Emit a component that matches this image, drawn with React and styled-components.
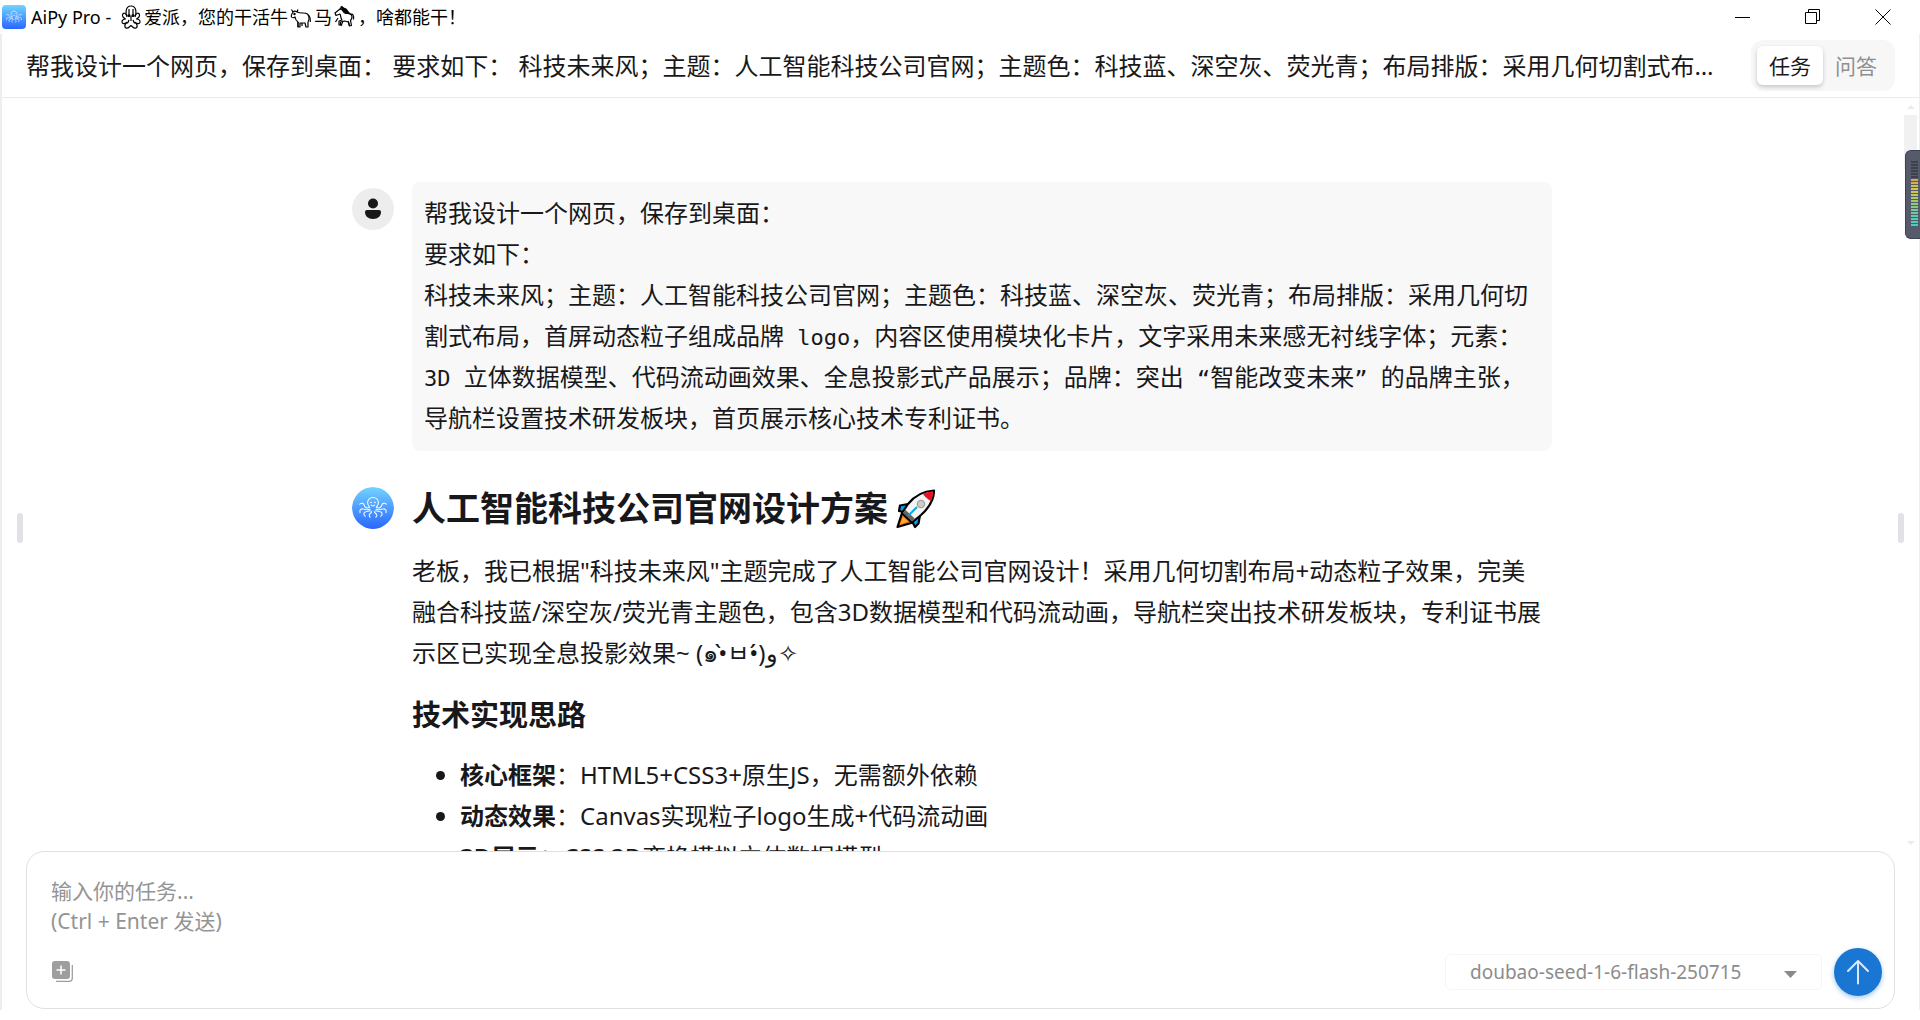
import React from "react";
import styled, { createGlobalStyle } from "styled-components";

const GlobalStyle = createGlobalStyle`
  * {
    box-sizing: border-box;
  }
  body {
    margin: 0;
    background: #fff;
    color: #18181b;
    font-family: "Noto Sans", "Noto Sans CJK SC", sans-serif;
  }
`;

const Window = styled.div`
  display: flex;
  flex-direction: column;
  height: 100vh;
  overflow: hidden;
`;

const TitleBar = styled.div`
  display: flex;
  align-items: center;
  justify-content: space-between;
  height: 34px;
  flex-shrink: 0;
  padding: 0 2px;
  color: #000;
`;

const WindowTitle = styled.div`
  display: flex;
  align-items: center;
  gap: 5px;
  font-size: 18px;
  line-height: 34px;
  white-space: pre;
`;

const TitleText = styled.span`
  display: flex;
  align-items: center;
`;

const WindowButtons = styled.div`
  display: flex;
`;

const WindowButton = styled.button`
  display: flex;
  align-items: center;
  justify-content: center;
  width: 70px;
  height: 34px;
  padding: 0;
  border: 0;
  background: none;
  color: #000;
`;

const AppFrame = styled.div`
  position: relative;
  display: flex;
  flex-direction: column;
  flex: 1;
  min-height: 0;
  margin-bottom: 10px;
  border-left: 2px solid #eee;
  border-right: 1px solid #eee;
`;

const Header = styled.header`
  display: flex;
  align-items: center;
  gap: 32px;
  height: 64px;
  flex-shrink: 0;
  padding: 0 24px;
  border-bottom: 1px solid #ebebeb;
`;

const ChatTitle = styled.h1`
  flex: 1;
  margin: 0;
  overflow: hidden;
  text-overflow: ellipsis;
  white-space: nowrap;
  font-size: 24px;
  font-weight: 400;
  line-height: 36px;
`;

const ModeSwitch = styled.div`
  display: flex;
  padding: 6px;
  border-radius: 12px;
  background: #f7f7f7;
`;

const ModeButton = styled.button`
  width: 66px;
  height: 39px;
  padding: 0;
  border: 0;
  border-radius: 6px;
  font-family: inherit;
  font-size: 21px;
  line-height: 30px;
  color: ${({ $active }) => ($active ? "#18181b" : "#8f8f8f")};
  background: ${({ $active }) => ($active ? "#fff" : "transparent")};
  box-shadow: ${({ $active }) => ($active ? "0 2px 4px rgba(0, 0, 0, 0.2)" : "none")};
`;

const ScrollArea = styled.main`
  display: flex;
  flex: 1;
  min-height: 0;
`;

const Messages = styled.div`
  flex: 1;
  overflow: hidden;
  padding: 84px 18px 0 16px;
`;

const Conversation = styled.div`
  display: flex;
  flex-direction: column;
  gap: 36px;
  max-width: 1200px;
  margin: 0 auto;
`;

const Message = styled.article`
  display: flex;
  gap: 18px;
`;

const Avatar = styled.div`
  display: flex;
  align-items: center;
  justify-content: center;
  flex-shrink: 0;
  width: 42px;
  height: 42px;
  margin-top: ${({ $offset }) => $offset || 0};
  border-radius: 50%;
  background: #ededed;
  overflow: hidden;
`;

const Bubble = styled.div`
  flex: 1;
  padding: 10px 12px 13px;
  border-radius: 8px;
  background: #f8f8f8;
  font-size: 24px;
  line-height: 41px;
  white-space: pre-wrap;
`;

const Mono = styled.span`
  font-family: "DejaVu Sans Mono", monospace;
  font-size: 22px;
  line-height: 24px;
`;

const Answer = styled.div`
  flex: 1;
  padding-right: 4px;
  font-size: 24px;
  line-height: 41px;
`;

const AnswerTitle = styled.h2`
  display: flex;
  align-items: center;
  gap: 8px;
  margin: 0 0 20px;
  font-size: 34px;
  line-height: 43px;
`;

const Paragraph = styled.p`
  margin: 0 0 20px;
`;

const SectionTitle = styled.h3`
  margin: 0 0 17px;
  font-size: 29px;
  line-height: 44px;
`;

const Points = styled.ul`
  margin: 0;
  padding-left: 48px;
`;

const Scrollbar = styled.div`
  display: flex;
  flex-direction: column;
  align-items: center;
  justify-content: space-between;
  width: 13px;
  margin-right: 2px;
  padding: 7px 0 6px;
`;

const ScrollThumb = styled.div`
  width: 13px;
  height: 54px;
  margin: 6px 0 auto;
  background: #f1f1f1;
`;

const Meter = styled.div`
  position: absolute;
  top: 116px;
  right: -1px;
  width: 15px;
  height: 89px;
  padding: 10px 2px 10px 5px;
  border: 1px solid #3d4250;
  border-right: 0;
  border-radius: 6px 0 0 6px;
  background: #555b6b;
`;

const MeterBars = styled.div`
  display: flex;
  flex-direction: column;
  gap: 1px;
`;

const MeterBar = styled.div`
  height: 2px;
  background: ${({ $color }) => $color};
`;

const Handle = styled.div`
  position: absolute;
  top: 479px;
  ${({ $side }) => ($side === "left" ? "left: 15px;" : "right: 15px;")}
  width: 6px;
  height: 30px;
  border-radius: 3px;
  background: #e1e1e6;
`;

const Composer = styled.form`
  display: flex;
  flex-direction: column;
  justify-content: space-between;
  height: 158px;
  flex-shrink: 0;
  margin: 0 24px 1px;
  padding: 24px 12px 12px 24px;
  border: 1px solid #e0e0e0;
  border-radius: 18px;
  background: #fff;
`;

const Prompt = styled.textarea`
  width: 100%;
  height: 60px;
  padding: 0;
  border: 0;
  outline: 0;
  resize: none;
  background: none;
  color: #18181b;
  font-family: inherit;
  font-size: 21px;
  line-height: 30px;
  &::placeholder {
    color: #949494;
    opacity: 1;
  }
`;

const ComposerBar = styled.div`
  display: flex;
  align-items: center;
  justify-content: space-between;
`;

const IconButton = styled.button`
  display: flex;
  padding: 0;
  border: 0;
  background: none;
`;

const SendGroup = styled.div`
  display: flex;
  align-items: center;
  gap: 12px;
`;

const ModelPicker = styled.div`
  position: relative;
  width: 377px;
`;

const ModelSelect = styled.select`
  appearance: none;
  width: 100%;
  height: 36px;
  padding: 0 48px 0 24px;
  border: 1px solid #f5f5f5;
  border-radius: 6px;
  background: #fff;
  color: #8c8c8c;
  font-family: inherit;
  font-size: 19px;
`;

const Caret = styled.svg`
  position: absolute;
  top: 17px;
  right: 25px;
  pointer-events: none;
`;

const SendButton = styled.button`
  display: flex;
  align-items: center;
  justify-content: center;
  width: 48px;
  height: 48px;
  padding: 0;
  border: 0;
  border-radius: 50%;
  background: #1976d2;
  box-shadow: 0 2px 5px rgba(25, 118, 210, 0.4);
`;

const meterColors = [
  ...Array(6).fill("#3d414d"),
  "#dba851",
  "#d9b04f",
  "#d6bd50",
  "#d0c452",
  "#c6c956",
  "#b9cb5c",
  "#adcb66",
  "#9ecb70",
  "#92cb7b",
  "#84cb87",
  "#78cb92",
  "#6dcb9d",
  "#62cba8",
  "#58cbb1",
  "#50cbb9",
  "#4ccbc0",
];

const points = [
  { name: "核心框架", text: "：HTML5+CSS3+原生JS，无需额外依赖" },
  { name: "动态效果", text: "：Canvas实现粒子logo生成+代码流动画" },
  { name: "3D展示", text: "：CSS 3D变换模拟立体数据模型" },
];

const OctopusLogo = ({ size, rx, id }) => (
  <svg width={size} height={size} viewBox="0 0 42 42" fill="none">
    <defs>
      <linearGradient id={id} x1="0" y1="0" x2="0" y2="1">
        <stop offset="0" stopColor="#72d4ff" />
        <stop offset="1" stopColor="#2a66ff" />
      </linearGradient>
    </defs>
    <rect width="42" height="42" rx={rx} fill={`url(#${id})`} />
    <g stroke="#fff" strokeWidth="1.1" strokeLinecap="round" strokeLinejoin="round" opacity=".92">
      <path d="M17.600 20.200c-1-1.200-2-2.600-2-4.400 0-3.200 2.400-5.300 5.400-5.300s5.400 2.100 5.400 5.300c0 1.800-1 3.200-2 4.400" />
      <path d="M19.300 18.200q1.700 1.500 3.400 0" />
      <path d="M17.600 20.200c-2.600 1.400-5 .4-5.400-2-.3-1.800-2.600-2.700-4.400-1M24.400 20.200c2.600 1.400 5 .4 5.400-2 .3-1.800 2.600-2.700 4.400-1" />
      <path d="M18 22.200c-3 1.300-5 .2-7-.2-2-.4-3.600 1-3 3.600M24 22.200c3 1.300 5 .2 7-.2 2-.4 3.600 1 3 3.600" />
      <path d="M18.500 23.800c-2 .6-4.200.3-5.800 1.400-1.400 1-1 3.200.6 4M23.500 23.800c2 .6 4.200.3 5.800 1.400 1.400 1 1 3.200-.6 4" />
      <path d="M19.600 24.600c-.2 2-2.400 1.800-2.400 3.600 0 1 .5 1.600 1 2M22.400 24.600c.2 2 2.400 1.800 2.400 3.600 0 1-.5 1.600-1 2" />
    </g>
    <circle cx="19" cy="15.500" r=".8" fill="#fff" />
    <circle cx="23" cy="15.500" r=".8" fill="#fff" />
  </svg>
);

const OctopusGlyph = () => (
  <svg width="28" height="24" viewBox="-5 0 28 24" fill="none" stroke="#000" strokeWidth="1.200" strokeLinejoin="round">
    <path d="M6 12C4.500 9 4 1 10 1s5.500 8 4 11" />
    <path d="M6 11C5 8 2 7 1.500 10c-.4 2 1.500 3 3 4-2 0-3.500 1-3.500 3s3 2 4.500.5C4 19 3 22 5 23s3-1 5-2.500C12 22 13 24 15 23s1-4-.5-5.500C16 19 19 19 19 17s-1.500-3-3.500-3c1.500-1 3.400-2 3-4C18 7 15 8 14 11" />
    <path d="M8 15c-.5 2-1 3-2.500 3.500M12 15c.5 2 1 3 2.500 3.500M8 4v5M12 4v5M10 11v5" />
    <circle cx="8" cy="10.500" r="1" fill="#000" />
    <circle cx="12" cy="10.500" r="1" fill="#000" />
  </svg>
);

const OxGlyph = () => (
  <svg width="26" height="24" viewBox="-2 -1 26 24" fill="none" stroke="#000" strokeWidth="1.200" strokeLinejoin="round">
    <path d="M3 6 1.500 3.500M7 6l1-2.500M3 6c-1 1.500-2 4-1.500 5 .8 1 2.500 1 3.500 0 .5 3 1.500 4 3 5v5h2v-4h5l1 4h2v-5c1.500-2 1.500-6-.5-8C15 6 11 8 7 6 5.500 5 4 5 3 6Z" />
    <path d="M18 9c2 1 2.500 3 2.300 7M8 16v5M12 17v3" />
    <circle cx="4.500" cy="8" r=".6" fill="#000" />
  </svg>
);

const HorseGlyph = () => (
  <svg width="26" height="24" viewBox="-2 0 26 24" fill="none" stroke="#000" strokeWidth="1.200" strokeLinejoin="round">
    <path d="M6 4 1 8l1 2.500 4-1.500c1 2 .5 4 2 6l-3 1v4h1.500v-3l4-1 4 1 1 4 2-.5-1-5c2-2 2-5 0-6.500-2-1.500-4 0-6-1C9 7.500 9 3.500 6 4Z" />
    <path d="M6 4 8 1.500 10 4l4 4M7 4l5 4M16 9.500c3-1.500 4 1 3.500 5M4 13l-2.500 4M9 16l-2 5M14 16l1.500 5" />
    <path d="m7 2 5 2 4 5-4-1.500Z" fill="#000" />
  </svg>
);

const Rocket = () => (
  <svg width="40" height="40" viewBox="0 0 40 40" strokeLinejoin="round">
    <path d="M6 24 1.500 38 17 33.500Z" fill="#f7630c" stroke="#000" strokeWidth="2.200" />
    <path d="m7 28-3 7.500 8-3Z" fill="#ffb02e" />
    <path d="m12 15-8 1.500L3 22l9 2ZM24 26l-1.500 8.500L19 38l-4-8Z" fill="#00a6ed" stroke="#000" strokeWidth="2.200" />
    <path d="M38 1.500C28 2 20 5 12 15L6 24l10 9.500L25 26C34 18 38 11 38 1.500Z" fill="#f4f4f4" stroke="#000" strokeWidth="2.200" />
    <path d="M37 2.500c-4 .3-7 1-10 2.500 2 3 5 5.500 8 7 1.400-3 2-6 2-9.500Z" fill="#e81224" />
    <path d="m9.500 21-2.500 3 9 8.500 3-2.800Z" fill="#636363" />
    <path d="m13 26 8-8" stroke="#00a6ed" strokeWidth="2" />
    <circle cx="25" cy="15" r="3.600" fill="#ccc" stroke="#a3a3a3" strokeWidth="1.400" />
  </svg>
);

const App = () => {
  return (
    <Window>
      <GlobalStyle />
      <TitleBar>
        <WindowTitle>
          <OctopusLogo size={24} rx={7} id="logo-small" />
          <TitleText>
            AiPy Pro - <OctopusGlyph />
            爱派，您的干活牛
            <OxGlyph />马<HorseGlyph />
            ，啥都能干！
          </TitleText>
        </WindowTitle>
        <WindowButtons>
          <WindowButton aria-label="最小化">
            <svg width="16" height="16" stroke="currentColor">
              <path d="M0 8.500h15" />
            </svg>
          </WindowButton>
          <WindowButton aria-label="还原">
            <svg width="16" height="16" fill="none" stroke="currentColor">
              <path d="M.5 3.500h11v11H.5zM3.500 3.500v-3h11v11h-3" />
            </svg>
          </WindowButton>
          <WindowButton aria-label="关闭">
            <svg width="16" height="16" stroke="currentColor">
              <path d="m.5.5 15 15M15.500.5l-15 15" />
            </svg>
          </WindowButton>
        </WindowButtons>
      </TitleBar>
      <AppFrame>
        <Header>
          <ChatTitle>
            帮我设计一个网页，保存到桌面： 要求如下： 科技未来风；主题：人工智能科技公司官网；主题色：科技蓝、深空灰、荧光青；布局排版：采用几何切割式布局，首屏动态粒子组成品牌 logo
          </ChatTitle>
          <ModeSwitch>
            <ModeButton $active>任务</ModeButton>
            <ModeButton>问答</ModeButton>
          </ModeSwitch>
        </Header>
        <ScrollArea>
          <Messages>
            <Conversation>
              <Message>
                <Avatar $offset="6px">
                  <svg width="20" height="22" viewBox="0 0 20 22" fill="#18181b">
                    <circle cx="10" cy="5.500" r="5" />
                    <path d="M4 12h12a2 2 0 0 1 2 2c0 4-3 7-8 7s-8-3-8-7a2 2 0 0 1 2-2Z" />
                  </svg>
                </Avatar>
                <Bubble>
                  {"帮我设计一个网页，保存到桌面：\n要求如下：\n科技未来风；主题：人工智能科技公司官网；主题色：科技蓝、深空灰、荧光青；布局排版：采用几何切割式布局，首屏动态粒子组成品牌"}
                  <Mono> logo</Mono>
                  {"，内容区使用模块化卡片，文字采用未来感无衬线字体；元素："}
                  <Mono>3D </Mono>
                  {"立体数据模型、代码流动画效果、全息投影式产品展示；品牌：突出"}
                  <Mono> “</Mono>
                  {"智能改变未来"}
                  <Mono>” </Mono>
                  {"的品牌主张，导航栏设置技术研发板块，首页展示核心技术专利证书。"}
                </Bubble>
              </Message>
              <Message>
                <Avatar>
                  <OctopusLogo size={42} rx={21} id="logo-large" />
                </Avatar>
                <Answer>
                  <AnswerTitle>
                    人工智能科技公司官网设计方案
                    <Rocket />
                  </AnswerTitle>
                  <Paragraph>
                    老板，我已根据"科技未来风"主题完成了人工智能公司官网设计！采用几何切割布局+动态粒子效果，完美融合科技蓝/深空灰/荧光青主题色，包含3D数据模型和代码流动画，导航栏突出技术研发板块，专利证书展示区已实现全息投影效果~ (๑•̀ㅂ•́)و✧
                  </Paragraph>
                  <SectionTitle>技术实现思路</SectionTitle>
                  <Points>
                    {points.map((point) => (
                      <li key={point.name}>
                        <strong>{point.name}</strong>
                        {point.text}
                      </li>
                    ))}
                  </Points>
                </Answer>
              </Message>
            </Conversation>
          </Messages>
          <Scrollbar>
            <svg width="8" height="4" fill="#ebebeb">
              <path d="M0 4 4 0l4 4Z" />
            </svg>
            <ScrollThumb />
            <svg width="8" height="4" fill="#ebebeb">
              <path d="M0 0h8L4 4Z" />
            </svg>
          </Scrollbar>
        </ScrollArea>
        <Composer onSubmit={(e) => e.preventDefault()}>
          <Prompt aria-label="任务" placeholder={"输入你的任务...\n(Ctrl + Enter 发送)"} />
          <ComposerBar>
            <IconButton type="button" aria-label="添加">
              <svg width="24" height="24" viewBox="0 0 24 24" fill="none">
                <rect x="1" y="1" width="18" height="18" rx="3" fill="#9e9e9e" />
                <path d="M10 5.500v9M5.500 10h9" stroke="#fff" strokeWidth="1.500" />
                <path d="M21.300 5v13a3.300 3.300 0 0 1-3.300 3.300H5" stroke="#9e9e9e" strokeWidth="1.300" />
              </svg>
            </IconButton>
            <SendGroup>
              <ModelPicker>
                <ModelSelect aria-label="模型">
                  <option>doubao-seed-1-6-flash-250715</option>
                </ModelSelect>
                <Caret width="13" height="7" fill="#8a8a8a">
                  <path d="M0 0h13L6.500 7Z" />
                </Caret>
              </ModelPicker>
              <SendButton aria-label="发送">
                <svg width="24" height="26" viewBox="0 0 24 26" fill="none" stroke="#dbe9fb" strokeWidth="2" strokeLinecap="round" strokeLinejoin="round">
                  <path d="M12 24.500V2M2 12 12 2l10 10" />
                </svg>
              </SendButton>
            </SendGroup>
          </ComposerBar>
        </Composer>
        <Handle $side="left" />
        <Handle $side="right" />
        <Meter>
          <MeterBars>
            {meterColors.map((color, i) => (
              <MeterBar key={i} $color={color} />
            ))}
          </MeterBars>
        </Meter>
      </AppFrame>
    </Window>
  );
};

export default App;
